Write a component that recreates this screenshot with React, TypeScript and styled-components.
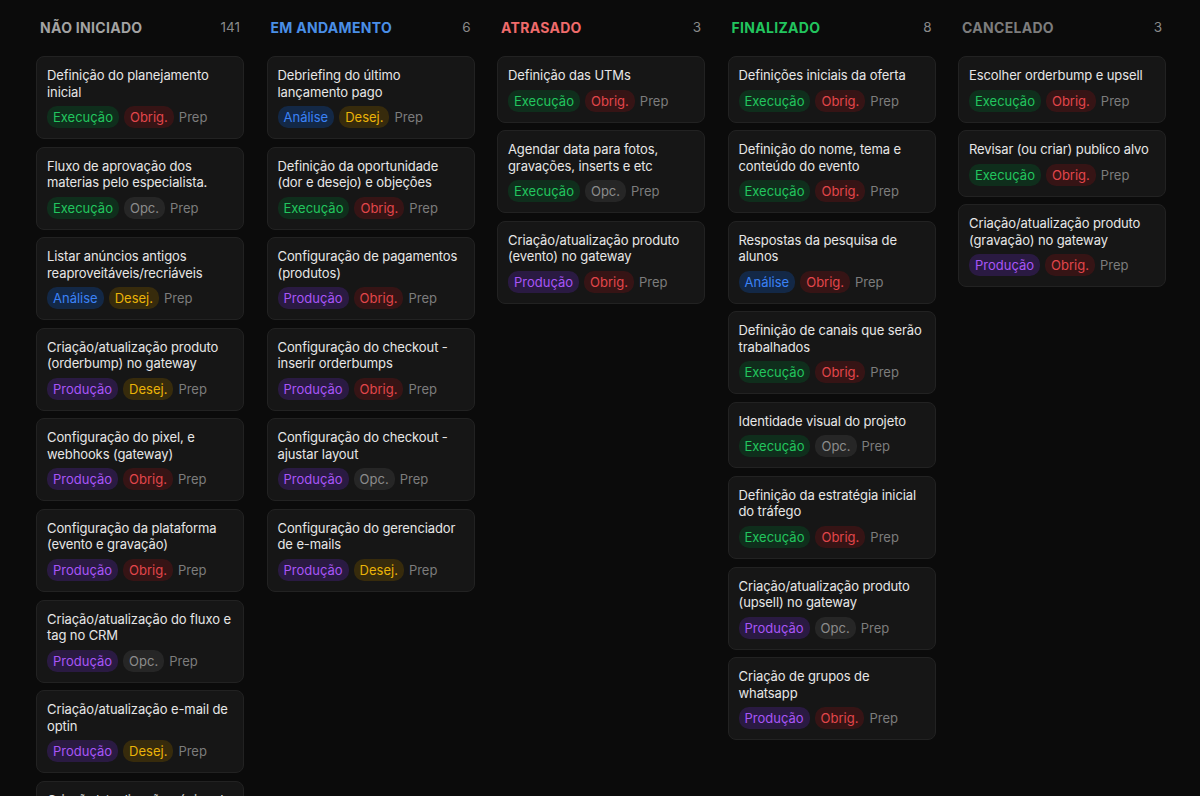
import styled, { createGlobalStyle } from "styled-components";

const GlobalStyle = createGlobalStyle`
  html, body {
    margin: 0;
    padding: 0;
    background: #0b0b0b;
    height: 100%;
    overflow: hidden;
  }
  body {
    font-family: "Inter", "Noto Sans", sans-serif;
    -webkit-font-smoothing: antialiased;
  }
`;

type TagKind = "exec" | "analise" | "prod" | "obrig" | "desej" | "opc";

const tagColors: Record<TagKind, { fg: string; bg: string; label: string }> = {
  exec: { fg: "#22c55e", bg: "#0f2e1c", label: "Execução" },
  analise: { fg: "#3b82f6", bg: "#132846", label: "Análise" },
  prod: { fg: "#a855f7", bg: "#2a1a42", label: "Produção" },
  obrig: { fg: "#e2464b", bg: "#361415", label: "Obrig." },
  desej: { fg: "#eab308", bg: "#372b0c", label: "Desej." },
  opc: { fg: "#8c8c8c", bg: "#262626", label: "Opc." },
};

type Task = { title: string; area: TagKind; priority: TagKind };

type Column = { name: string; color: string; count: number; tasks: Task[] };

const columns: Column[] = [
  {
    name: "Não iniciado",
    color: "#a3a3a3",
    count: 141,
    tasks: [
      { title: "Definição do planejamento inicial", area: "exec", priority: "obrig" },
      { title: "Fluxo de aprovação dos materias pelo especialista.", area: "exec", priority: "opc" },
      { title: "Listar anúncios antigos reaproveitáveis/recriáveis", area: "analise", priority: "desej" },
      { title: "Criação/atualização produto (orderbump) no gateway", area: "prod", priority: "desej" },
      { title: "Configuração do pixel, e webhooks (gateway)", area: "prod", priority: "obrig" },
      { title: "Configuração da plataforma (evento e gravação)", area: "prod", priority: "obrig" },
      { title: "Criação/atualização do fluxo e tag no CRM", area: "prod", priority: "opc" },
      { title: "Criação/atualização e-mail de optin", area: "prod", priority: "desej" },
      { title: "Criação/atualização página de captura", area: "prod", priority: "obrig" },
    ],
  },
  {
    name: "Em andamento",
    color: "#4a8fe7",
    count: 6,
    tasks: [
      { title: "Debriefing do último lançamento pago", area: "analise", priority: "desej" },
      { title: "Definição da oportunidade (dor e desejo) e objeções", area: "exec", priority: "obrig" },
      { title: "Configuração de pagamentos (produtos)", area: "prod", priority: "obrig" },
      { title: "Configuração do checkout - inserir orderbumps", area: "prod", priority: "obrig" },
      { title: "Configuração do checkout - ajustar layout", area: "prod", priority: "opc" },
      { title: "Configuração do gerenciador de e-mails", area: "prod", priority: "desej" },
    ],
  },
  {
    name: "Atrasado",
    color: "#ef6b6b",
    count: 3,
    tasks: [
      { title: "Definição das UTMs", area: "exec", priority: "obrig" },
      { title: "Agendar data para fotos, gravações, inserts e etc", area: "exec", priority: "opc" },
      { title: "Criação/atualização produto (evento) no gateway", area: "prod", priority: "obrig" },
    ],
  },
  {
    name: "Finalizado",
    color: "#22c55e",
    count: 8,
    tasks: [
      { title: "Definições iniciais da oferta", area: "exec", priority: "obrig" },
      { title: "Definição do nome, tema e conteúdo do evento", area: "exec", priority: "obrig" },
      { title: "Respostas da pesquisa de alunos", area: "analise", priority: "obrig" },
      { title: "Definição de canais que serão trabalhados", area: "exec", priority: "obrig" },
      { title: "Identidade visual do projeto", area: "exec", priority: "opc" },
      { title: "Definição da estratégia inicial do tráfego", area: "exec", priority: "obrig" },
      { title: "Criação/atualização produto (upsell) no gateway", area: "prod", priority: "opc" },
      { title: "Criação de grupos de whatsapp", area: "prod", priority: "obrig" },
    ],
  },
  {
    name: "Cancelado",
    color: "#7d7d7d",
    count: 3,
    tasks: [
      { title: "Escolher orderbump e upsell", area: "exec", priority: "obrig" },
      { title: "Revisar (ou criar) publico alvo", area: "exec", priority: "obrig" },
      { title: "Criação/atualização produto (gravação) no gateway", area: "prod", priority: "obrig" },
    ],
  },
];

const Board = styled.div`
  display: grid;
  grid-template-columns: repeat(5, 208px);
  column-gap: 22.5px;
  align-items: start;
  padding: 16px 0 0 36px;
`;

const Lane = styled.section`
  display: flex;
  flex-direction: column;
`;

const LaneHeader = styled.header`
  display: flex;
  align-items: center;
  justify-content: space-between;
  height: 22px;
  padding: 0 4px;
  margin-bottom: 18px;
`;

const LaneTitle = styled.h2<{ $color: string }>`
  margin: 0;
  font-size: 14px;
  font-weight: 700;
  letter-spacing: 0.3px;
  text-transform: uppercase;
  color: ${(p) => p.$color};
`;

const LaneCount = styled.span`
  font-size: 13.5px;
  color: #8a8a8a;
`;

const CardList = styled.div`
  display: flex;
  flex-direction: column;
  gap: 7.6px;
`;

const Card = styled.article`
  display: flex;
  flex-direction: column;
  gap: 6px;
  padding: 10px;
  background: #161616;
  border: 1px solid #222222;
  border-radius: 8px;
`;

const CardTitle = styled.p`
  margin: 0;
  font-size: 13px;
  line-height: 16.5px;
  color: #e6e6e6;
  letter-spacing: -0.1px;
`;

const TagRow = styled.div`
  display: flex;
  align-items: center;
  gap: 5px;
`;

const Tag = styled.span<{ $fg: string; $bg: string }>`
  display: inline-flex;
  align-items: center;
  height: 22px;
  padding: 0 6px;
  border-radius: 10px;
  font-size: 13px;
  color: ${(p) => p.$fg};
  background: ${(p) => p.$bg};
`;

const Stage = styled.span`
  font-size: 13px;
  color: #7c7c7c;
`;

const TaskCard = ({ task }: { task: Task }) => {
  const area = tagColors[task.area];
  const priority = tagColors[task.priority];
  return (
    <Card>
      <CardTitle>{task.title}</CardTitle>
      <TagRow>
        <Tag $fg={area.fg} $bg={area.bg}>
          {area.label}
        </Tag>
        <Tag $fg={priority.fg} $bg={priority.bg}>
          {priority.label}
        </Tag>
        <Stage>Prep</Stage>
      </TagRow>
    </Card>
  );
};

const App = () => {
  return (
    <>
      <GlobalStyle />
      <Board>
        {columns.map((col) => (
          <Lane key={col.name}>
            <LaneHeader>
              <LaneTitle $color={col.color}>{col.name}</LaneTitle>
              <LaneCount>{col.count}</LaneCount>
            </LaneHeader>
            <CardList>
              {col.tasks.map((task) => (
                <TaskCard key={task.title} task={task} />
              ))}
            </CardList>
          </Lane>
        ))}
      </Board>
    </>
  );
};

export default App;
